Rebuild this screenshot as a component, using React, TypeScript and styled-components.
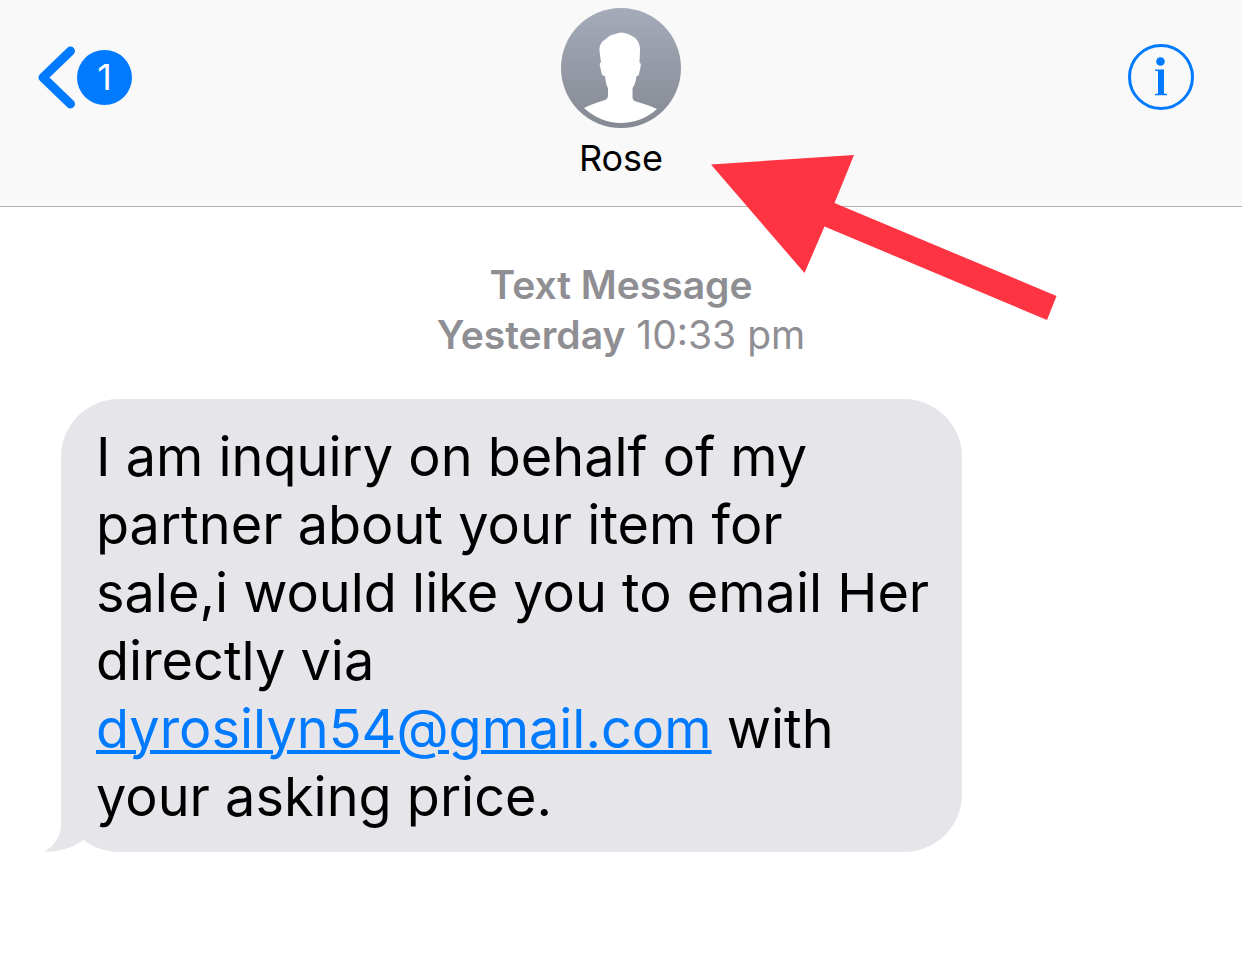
import React from "react";
import styled, { createGlobalStyle } from "styled-components";

const GlobalStyle = createGlobalStyle`
  * { box-sizing: border-box; }
  body {
    margin: 0;
    background: #ffffff;
    color: #000000;
    font-family: Inter, "Liberation Sans", sans-serif;
  }
`;

const Screen = styled.div`
  position: relative;
  min-height: 100vh;
  overflow: hidden;
`;

const Header = styled.header`
  display: grid;
  grid-template-columns: 1fr auto 1fr;
  align-items: start;
  padding: 8px 38px 24px;
  background: #f9f9f9;
  border-bottom: 1px solid #b2b2b2;
`;

const IconButton = styled.button<{ $side: "left" | "right" }>`
  display: flex;
  align-items: center;
  gap: 1px;
  margin: 36px ${(p) => (p.$side === "right" ? "10px" : "0")} 0 0;
  padding: 0;
  height: 66px;
  border: 0;
  background: none;
  color: #007aff;
  font: inherit;
  cursor: pointer;
  justify-self: ${(p) => (p.$side === "right" ? "end" : "start")};
`;

const Badge = styled.span`
  width: 55px;
  height: 55px;
  border-radius: 50%;
  background: #007aff;
  color: #ffffff;
  font-size: 36px;
  line-height: 55px;
  text-align: center;
`;

const Contact = styled.div`
  display: flex;
  flex-direction: column;
  align-items: center;
`;

const ContactName = styled.h1`
  margin: 8px 0 2px;
  font-size: 36px;
  font-weight: 400;
  line-height: 44px;
`;

const Thread = styled.main`
  padding: 53px 0;
`;

const Stamp = styled.div`
  margin-bottom: 39px;
  color: #8e8e93;
  font-size: 39px;
  line-height: 50px;
  text-align: center;

  strong { font-weight: 600; }
  p { margin: 0; }
`;

const Bubble = styled.div`
  position: relative;
  margin: 0 280px 0 61px;
  padding: 24px 24px 21px 35px;
  border-radius: 58px;
  background: #e5e5ea;
  font-size: 54px;
  line-height: 68px;

  p { margin: 0; }
`;

const Tail = styled.svg`
  position: absolute;
  left: -17px;
  bottom: 0;
`;

const MailLink = styled.a`
  color: #007aff;
  text-decoration: underline;
  text-decoration-thickness: 4px;
  text-underline-offset: 2px;
  text-decoration-skip-ink: auto;
`;

const Arrow = styled.svg`
  position: absolute;
  top: 155px;
  left: calc(50% + 90px);
  pointer-events: none;
`;

function Chevron() {
  return (
    <svg width="38" height="63" viewBox="0 0 38 63" aria-hidden="true">
      <path d="M32.500 5L5 31.500L32.500 58" fill="none" stroke="#007aff" strokeWidth="9" strokeLinecap="round" strokeLinejoin="round" />
    </svg>
  );
}

function InfoIcon() {
  return (
    <svg width="66" height="66" viewBox="0 0 66 66" aria-hidden="true">
      <circle cx="33" cy="33" r="31.500" fill="none" stroke="#007aff" strokeWidth="3" />
      <circle cx="32.500" cy="17.500" r="4.300" fill="#007aff" />
      <path d="M27 25.500H36V49.500L39 50V51.200H27V50L30 49.500V27.300L27 26.800Z" fill="#007aff" />
    </svg>
  );
}

function Avatar() {
  return (
    <svg width="120" height="120" viewBox="0 0 120 120" role="img" aria-label="Contact photo">
      <defs>
        <linearGradient id="avatarShade" x1="0" y1="0" x2="0" y2="1">
          <stop offset="0" stopColor="#a5abb9" />
          <stop offset="1" stopColor="#858993" />
        </linearGradient>
      </defs>
      <circle cx="60" cy="60" r="60" fill="url(#avatarShade)" />
      <path
        d="M60 24.500C65 25 68 26 71 28C77 31 79 36 79 42L78.500 54.500C80 55 80 57 79.500 59L78 66C77.500 68 76.500 68 75.500 68C75 72 74 77 71.500 80V90C72 92 73 93 75 93.500C83 96 90 98 96 101C86 110 73 115 60 115C46 115 33 109 23 100C31 96 38 94 44 92C46 91 47 90 47 87V80C45 77 44.500 72 44 68C41.500 68 41 67 40.500 65L39 58C38.500 56 38.500 55 40 54.500L38.500 43C38 37 41 33 45 31C48 27 54 26 60 24.500Z"
        fill="#ffffff"
      />
    </svg>
  );
}

export default function App() {
  return (
    <Screen>
      <GlobalStyle />
      <Header>
        <IconButton $side="left" type="button" aria-label="Back, 1 unread">
          <Chevron />
          <Badge>1</Badge>
        </IconButton>
        <Contact>
          <Avatar />
          <ContactName>Rose</ContactName>
        </Contact>
        <IconButton $side="right" type="button" aria-label="Contact details">
          <InfoIcon />
        </IconButton>
      </Header>
      <Thread>
        <Stamp>
          <p><strong>Text Message</strong></p>
          <p><strong>Yesterday</strong> <time>10:33 pm</time></p>
        </Stamp>
        <Bubble>
          <Tail width="60" height="60" viewBox="0 0 60 60" aria-hidden="true">
            <path d="M17 0V33C17 43 11 54 0 59.500C14 60 26 57 38 49L50 30V0Z" fill="#e5e5ea" />
          </Tail>
          <p>
            I am inquiry on behalf of my partner about your item for
            <br />
            sale,i would like you to email Her directly via{" "}
            <MailLink href="mailto:dyrosilyn54@gmail.com">dyrosilyn54@gmail.com</MailLink> with
            your asking price.
          </p>
        </Bubble>
      </Thread>
      <Arrow width="346" height="166" viewBox="0 0 346 166" aria-hidden="true">
        <path d="M0 9.500L143 0L123.500 48L345.500 141L336 165L113.500 71.500L93.500 118Z" fill="#ff3442" />
      </Arrow>
    </Screen>
  );
}
